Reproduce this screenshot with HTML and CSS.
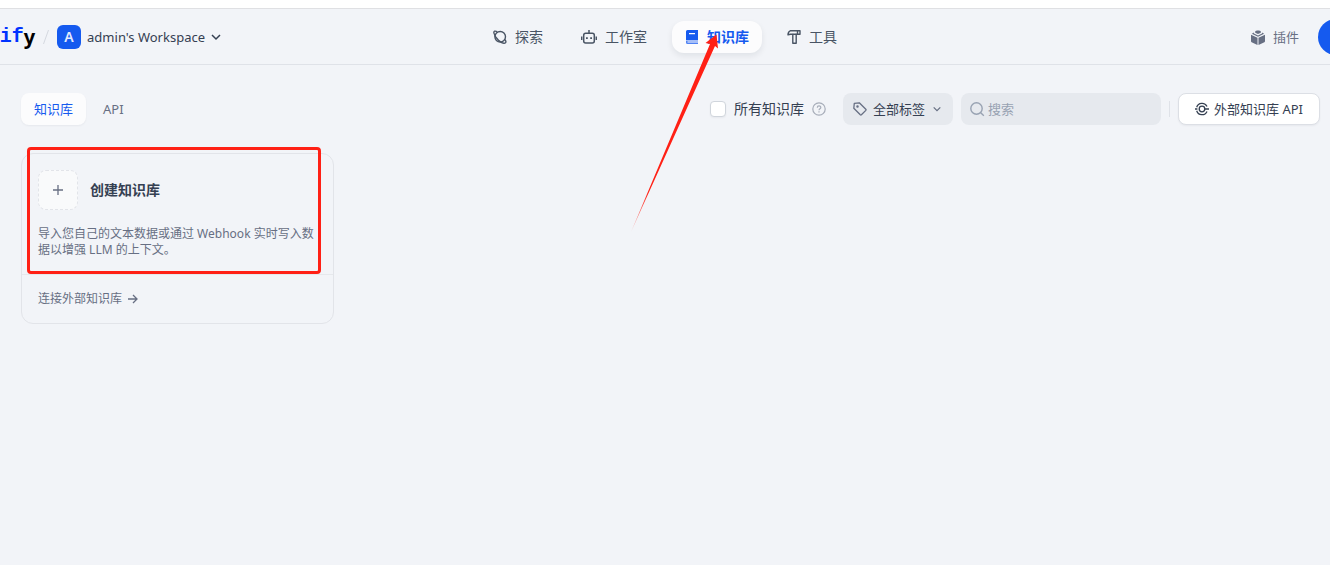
FILE: index.html
```html
<!DOCTYPE html>
<html lang="zh-CN">
<head>
  <meta charset="UTF-8" />
  <meta name="viewport" content="width=device-width, initial-scale=1.0" />
  <title>知识库 - Dify</title>
  <link rel="stylesheet" href="styles.css">
</head>
<body>
  <header class="header">
    <div class="header-left">
      <a class="logo" href="#"><span class="logo-d">D</span><span class="logo-if">if</span><span class="logo-y">y</span></a>
      <svg class="slash" width="8" height="16" viewBox="0 0 8 16"><path d="M1.5 15L6.5 1" stroke="#d5d9e0" fill="none"/></svg>
      <button class="workspace" type="button">
        <span class="workspace-badge">A</span>
        <span>admin's Workspace</span>
        <svg width="10" height="10" viewBox="0 0 10 10" fill="none" stroke="#354052" stroke-width="1.5"><path d="M1 3l4 4 4-4"/></svg>
      </button>
    </div>

    <nav class="nav">
      <a class="nav-item" href="#">
        <svg width="14" height="14" viewBox="0 0 14 14" fill="none" stroke="#495464" stroke-width="1.4">
          <circle cx="7.2" cy="6.8" r="5.3"/>
          <path d="M4.200 1.700C2 .6.600 1 .9 3c.4 2.400 2.300 5.100 4.600 7.200 2.600 2.300 5.800 3.600 7 2.500.7-.7.400-1.900-.4-3.200"/>
        </svg>
        <span>探索</span>
      </a>
      <a class="nav-item" href="#">
        <svg width="16" height="14" viewBox="0 0 16 14" fill="none" stroke="#495464" stroke-width="1.5">
          <rect x="2.700" y="3.200" width="10.600" height="9.800" rx="2"/>
          <path d="M8 0v3.200M.7 6.500v3.500M15.300 6.500v3.500"/>
          <path d="M5 8.200h1.800M9.200 8.200H11" stroke-width="1.800"/>
        </svg>
        <span>工作室</span>
      </a>
      <a class="nav-item active" href="#">
        <svg width="14" height="14" viewBox="0 0 14 14">
          <path d="M2.500 0H13v10H1V1.500A1.500 1.500 0 0 1 2.500 0zM4 3v1.200h6V3z" fill="#155aef" fill-rule="evenodd"/>
          <path d="M1 10.500h12v1H2.500v1H13V14H2.500A1.500 1.500 0 0 1 1 12.500z" fill="#155aef" opacity=".75"/>
        </svg>
        <span>知识库</span>
      </a>
      <a class="nav-item" href="#">
        <svg width="14" height="14" viewBox="0 0 14 14" fill="none" stroke="#495464" stroke-width="1.400" stroke-linejoin="round">
          <path d="M3.200.8H13v3.400H9.200v9H5.800v-9H3.500L1 4.800C1 2.800 1.800 1.300 3.200.8z"/>
          <path d="M10.500 1v3M5.800 4.200h3.400"/>
        </svg>
        <span>工具</span>
      </a>
    </nav>

    <div class="header-right">
      <a class="plugins" href="#">
        <svg width="14" height="15" viewBox="0 0 14 15" fill="#676f83">
          <path d="M0 4.800l6.500 3V15L.6 12.200A1 1 0 0 1 0 11.300zM14 4.800l-6.500 3V15l5.900-2.800a1 1 0 0 0 .6-.9z"/>
          <path d="M3 2.500L.8 3.800 7 6.800l6.200-3L11 2.500v1L7 5.400 3 3.500z"/>
          <path d="M4.200 1.500C4.700.1 9.300.1 9.800 1.500v1.200L7 4 4.200 2.700z"/>
        </svg>
        <span>插件</span>
      </a>
      <button class="avatar" type="button" aria-label="账户"></button>
    </div>
  </header>

  <main class="main">
    <div class="toolbar">
      <div class="tabs">
        <button class="tab active" type="button">知识库</button>
        <button class="tab" type="button">API</button>
      </div>
      <div class="filters">
        <div class="all-check">
          <input type="checkbox" id="all" />
          <label for="all">所有知识库</label>
          <svg width="14" height="14" viewBox="0 0 14 14" fill="none" stroke="#a7adb9" stroke-width="1.200">
            <circle cx="7" cy="7" r="6.200"/>
            <path d="M5.300 5.700C5.300 3.300 8.800 3.400 8.800 5.500 8.800 6.800 7 6.800 7 8.300M7 9.300v1.300"/>
          </svg>
        </div>
        <button class="tag-filter" type="button">
          <svg width="14" height="14" viewBox="0 0 14 14" fill="none" stroke="#676f83" stroke-width="1.300" stroke-linejoin="round">
            <path d="M1.300 1.300l5-.5 6.500 6.500a.8.800 0 0 1 0 1.100l-4.400 4.400a.8.800 0 0 1-1.100 0L.8 6.300z"/>
            <circle cx="4.500" cy="4.500" r=".6"/>
          </svg>
          <span>全部标签</span>
          <svg class="chevron" width="8" height="8" viewBox="0 0 8 8" fill="none" stroke="#676f83" stroke-width="1.200"><path d="M.7 2.300L4 5.600l3.300-3.300"/></svg>
        </button>
        <div class="search">
          <svg width="16" height="16" viewBox="0 0 16 16" fill="none" stroke="#98a2b2" stroke-width="1.400">
            <circle cx="7.500" cy="7.500" r="5.700"/><path d="M11.500 11.500l3.300 3.300"/>
          </svg>
          <input type="text" placeholder="搜索" aria-label="搜索" />
        </div>
        <span class="divider"></span>
        <button class="api-button" type="button">
          <svg width="14" height="14" viewBox="0 0 14 14" fill="none" stroke="#354052" stroke-width="1.300">
            <path d="M12 4.600A5.500 5.500 0 0 0 1.700 5.200M1.700 8.800A5.500 5.500 0 0 0 12 9.400"/>
            <circle cx="7" cy="7" r="2.800"/>
            <path d="M9.800 7H14M0 7h2.400"/>
          </svg>
          <span>外部知识库 API</span>
        </button>
      </div>
    </div>

    <div class="grid">
      <section class="card">
        <a class="card-create" href="#">
          <span class="card-head">
            <span class="plus"><svg width="10" height="10" viewBox="0 0 10 10" stroke="#676f83" stroke-width="1.300"><path d="M5 0v10M0 5h10"/></svg></span>
            <span class="card-title">创建知识库</span>
          </span>
          <span class="card-desc">导入您自己的文本数据或通过 Webhook 实时写入数据以增强 LLM 的上下文。</span>
        </a>
        <a class="card-link" href="#">
          <span>连接外部知识库</span>
          <svg width="10" height="10" viewBox="0 0 10 10" fill="none" stroke="#676f83" stroke-width="1.300"><path d="M0 5h9M5 1l4 4-4 4"/></svg>
        </a>
      </section>
    </div>
  </main>

  <!-- guide marks over the page -->
  <div class="mark-box"></div>
  <svg class="mark-arrow" width="90" height="200" viewBox="0 0 90 200">
    <defs>
      <linearGradient id="tail" x1="0" y1="1" x2="0" y2="0">
        <stop offset="0" stop-color="#ff2015" stop-opacity=".3"/>
        <stop offset=".2" stop-color="#ff2015"/>
      </linearGradient>
    </defs>
    <path d="M1 199L80 11 75.500 10 86.500 1.500 88 15.500 85 13z" fill="url(#tail)"/>
  </svg>
</body>
</html>
```

FILE: styles.css
```css
* {
  box-sizing: border-box;
}
body {
  margin: 0;
  min-height: 100vh;
  position: relative;
  overflow-x: hidden;
  background: #f2f4f8;
  color: #354052;
  font-family: "Noto Sans", "Noto Sans CJK SC", sans-serif;
  font-size: 14px;
  line-height: 20px;
}
a {
  color: inherit;
  text-decoration: none;
}
button {
  font: inherit;
  color: inherit;
  background: none;
  border: none;
  padding: 0;
  cursor: pointer;
}
svg {
  flex: none;
}

/* header */
.header {
  display: grid;
  grid-template-columns: 1fr auto 1fr;
  align-items: center;
  height: 65px;
  padding-top: 2px;
  border-top: 8px solid #fff;
  border-bottom: 1px solid #dfe2e8;
  box-shadow: inset 0 1px #dfe0e3;
  overflow: hidden;
}
.header-left {
  display: flex;
  align-items: center;
  gap: 7px;
}
.logo {
  display: flex;
  align-items: center;
  margin-left: -15px;
  color: #000;
  font-size: 20px;
  font-weight: 700;
  line-height: 24px;
}
.logo-if {
  color: #0033ff;
  font-family: "Liberation Mono", monospace;
}
.workspace {
  display: flex;
  align-items: center;
  gap: 6px;
  font-size: 13px;
}
.workspace-badge {
  width: 24px;
  height: 24px;
  border-radius: 6px;
  background: #155aef;
  color: #e3ebfd;
  font-size: 14px;
  font-weight: 600;
  line-height: 24px;
}
.nav {
  display: flex;
  gap: 12px;
}
.nav-item {
  display: flex;
  align-items: center;
  gap: 8px;
  height: 32px;
  padding: 0 13px;
  border-radius: 12px;
  color: #495464;
}
.nav-item.active {
  background: #fcfcfd;
  color: #155aef;
  font-weight: 700;
  box-shadow: 0 3px 6px rgba(16, 24, 40, 0.08);
}
.header-right {
  display: flex;
  align-items: center;
  justify-content: flex-end;
  gap: 19px;
  margin-right: -24px;
}
.plugins {
  display: flex;
  align-items: center;
  gap: 8px;
  color: #676f83;
  font-size: 13px;
}
.avatar {
  width: 36px;
  height: 36px;
  border-radius: 50%;
  background: #155aef;
}

/* toolbar */
.main {
  padding: 28px 10px 0 21px;
}
.toolbar {
  display: flex;
  justify-content: space-between;
  align-items: center;
  font-size: 13px;
}
.tabs {
  display: flex;
  gap: 4px;
}
.tab {
  height: 32px;
  padding: 0 13px;
  border-radius: 8px;
  color: #676f83;
}
.tab.active {
  background: #fcfcfd;
  color: #155aef;
  box-shadow: 0 1px 2px rgba(16, 24, 40, 0.05);
}
.filters {
  display: flex;
  align-items: center;
  gap: 8px;
}
.all-check {
  display: flex;
  align-items: center;
  gap: 8px;
  margin-right: 9px;
  font-size: 14px;
}
.all-check input {
  appearance: none;
  width: 16px;
  height: 16px;
  margin: 0;
  border: 1px solid #d0d5dc;
  border-radius: 4px;
  background: #fff;
  box-shadow: 0 1px 2px rgba(16, 24, 40, 0.05);
}
.tag-filter {
  display: flex;
  align-items: center;
  gap: 6px;
  height: 32px;
  padding: 0 12px 0 10px;
  border-radius: 8px;
  background: #e6e9ee;
}
.chevron {
  margin-left: 2px;
}
.search {
  display: flex;
  align-items: center;
  gap: 3px;
  width: 200px;
  height: 32px;
  padding: 0 8px;
  border-radius: 8px;
  background: #e6e9ee;
}
.search input {
  flex: 1;
  min-width: 0;
  padding: 0;
  border: none;
  outline: none;
  background: none;
  color: inherit;
  font: inherit;
}
.search input::placeholder {
  color: #98a2b2;
}
.divider {
  width: 1px;
  height: 16px;
  background: #dfe2e8;
}
.api-button {
  display: flex;
  align-items: center;
  gap: 5px;
  height: 32px;
  padding: 0 16px;
  border: 1px solid #dcdfe5;
  border-radius: 8px;
  background: #fff;
  box-shadow: 0 1px 2px rgba(16, 24, 40, 0.05);
}

/* cards */
.grid {
  display: grid;
  grid-template-columns: repeat(4, 1fr);
  gap: 12px;
  padding: 28px 12px 0 0;
}
.card {
  border: 1px solid #e2e4e9;
  border-radius: 12px;
  color: #676f83;
  font-size: 12px;
  line-height: 16px;
}
.card-create {
  display: block;
  padding: 16px 14px 16px 16px;
}
.card-head {
  display: flex;
  align-items: center;
  gap: 12px;
  margin-bottom: 16px;
}
.plus {
  display: flex;
  align-items: center;
  justify-content: center;
  width: 40px;
  height: 40px;
  border: 1px dashed #e2e4e9;
  border-radius: 8px;
  background: #f9fafb;
}
.card-title {
  color: #354052;
  font-size: 14px;
  font-weight: 700;
}
.card-desc {
  display: block;
}
.card-link {
  display: flex;
  align-items: center;
  gap: 6px;
  padding: 16px;
  border-top: 1px solid #e6e8ec;
}

/* guide marks */
.mark-box {
  position: absolute;
  left: 27px;
  top: 147px;
  width: 294px;
  height: 127px;
  border: 3px solid #ff2015;
  border-radius: 4px;
  pointer-events: none;
}
.mark-arrow {
  position: absolute;
  left: 630px;
  top: 33px;
  pointer-events: none;
}
```
